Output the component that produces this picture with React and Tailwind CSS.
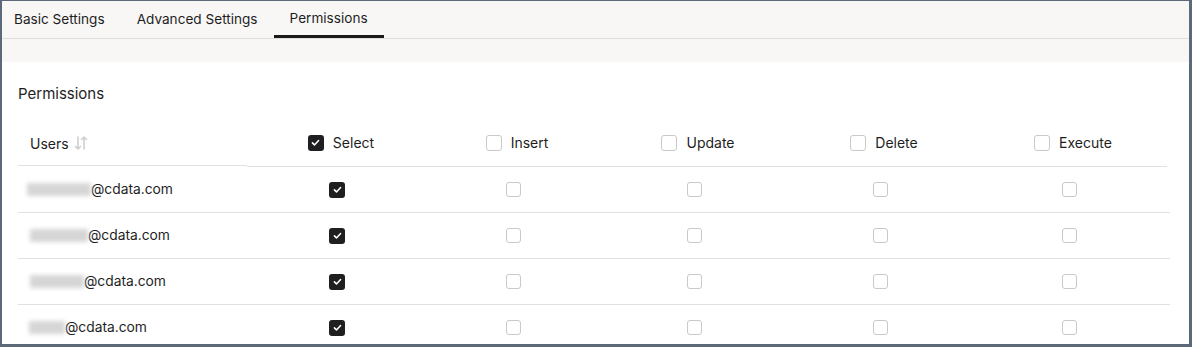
import React from "react";

const font = { fontFamily: "Inter, 'Noto Sans', sans-serif" };

const Checked = ({ size = "w-4 h-4" }) => (
  <span className={`${size} rounded-[3px] bg-[#1f1f21] flex items-center justify-center`}>
    <svg viewBox="0 0 16 16" className="w-[11px] h-[11px]" fill="none" stroke="white" strokeWidth="2.2" strokeLinecap="round" strokeLinejoin="round">
      <path d="M3.5 8.5l3 3 6-6.5" />
    </svg>
  </span>
);

const Unchecked = ({ size = "w-4 h-4" }) => (
  <span className={`${size} rounded-[3px] border border-[#c9c9c9] bg-white block`} />
);

const SortIcon = () => (
  <svg viewBox="0 0 16 16" className="w-4 h-4 ml-1" fill="none" stroke="#cfcfcf" strokeWidth="1.6" strokeLinecap="round" strokeLinejoin="round">
    <path d="M5 2v12M2.5 11.5L5 14l2.5-2.5" />
    <path d="M11 14V2M8.5 4.5L11 2l2.5 2.5" />
  </svg>
);

const columns = [
  { label: "Select", checked: true },
  { label: "Insert" },
  { label: "Update" },
  { label: "Delete" },
  { label: "Execute" },
];

const users = [
  { blur: "w-[64px]", ml: "ml-[9px]" },
  { blur: "w-[58px]", ml: "ml-[12px]" },
  { blur: "w-[54px]", ml: "ml-[12px]" },
  { blur: "w-[36px]", ml: "ml-[11px]" },
];

const grid = "grid grid-cols-[229px_180px_172px_190px_182px_196px]";

export default function App() {
  return (
    <div
      style={font}
      className="w-[1192px] h-[347px] overflow-hidden bg-white border-l-2 border-t border-r-[3px] border-b-[3px] border-[#5b6978] text-[#1e1e1e]"
    >
      <div className="bg-[#f8f7f6]">
        <div className="flex h-[38px] border-b border-[#dedede] text-[13.6px]">
          <div className="pl-3 pr-4 flex items-center">Basic Settings</div>
          <div className="px-4 flex items-center">Advanced Settings</div>
          <div className="px-4 flex items-center border-b-[3px] border-[#1a1a1a] pt-[1px]">Permissions</div>
        </div>
        <div className="h-[23px]" />
      </div>

      <div className="bg-white pl-4 pr-[19px]">
        <h2 className="text-[15px] pt-[21px] leading-[22px]">Permissions</h2>
        <div className="mt-4">
          <div className={`${grid} items-start text-[14px]`}>
            <div className="h-[45px] border-b border-[#e0e0e0] flex items-center pl-3">
              Users
              <SortIcon />
            </div>
            {columns.map((c) => (
              <div key={c.label} className="h-[46px] border-b border-[#e0e0e0] flex items-center justify-center gap-[9px] pl-2 pb-[2px]">
                {c.checked ? <Checked /> : <Unchecked />}
                <span>{c.label}</span>
              </div>
            ))}
          </div>
          {users.map((u, i) => (
            <div key={i} className={`${grid} h-[46px] border-b border-[#e0e0e0] text-[13.8px]`}>
              <div className="flex items-center">
                <span className={`${u.blur} ${u.ml} h-[13px] bg-[#d6d6d6] blur-[2px] block`} />
                <span>@cdata.com</span>
              </div>
              {columns.map((c) => (
                <div key={c.label} className="flex items-center justify-center">
                  {c.checked ? <Checked size="w-[16px] h-[16px]" /> : <Unchecked size="w-[15px] h-[15px]" />}
                </div>
              ))}
            </div>
          ))}
        </div>
      </div>
    </div>
  );
}
